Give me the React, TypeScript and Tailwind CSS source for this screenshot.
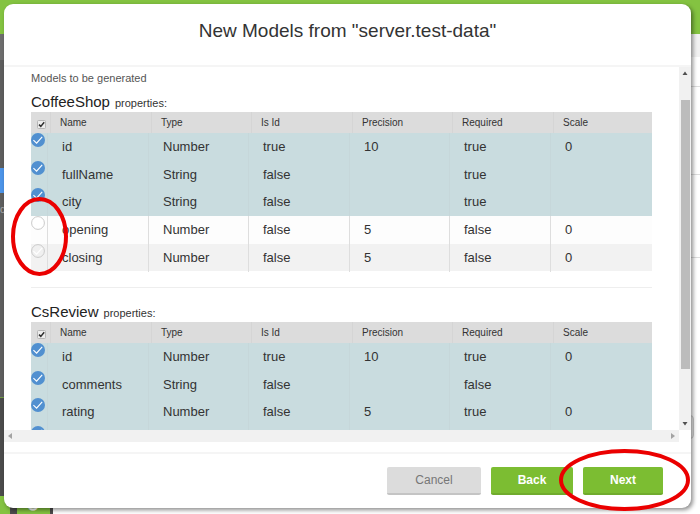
import React from "react";

type Row = { name: string; type: string; isId: string; precision: string; required: string; scale: string; on: boolean };

const headings = ["Name", "Type", "Is Id", "Precision", "Required", "Scale"];

const coffeeShop: Row[] = [
  { name: "id", type: "Number", isId: "true", precision: "10", required: "true", scale: "0", on: true },
  { name: "fullName", type: "String", isId: "false", precision: "", required: "true", scale: "", on: true },
  { name: "city", type: "String", isId: "false", precision: "", required: "true", scale: "", on: true },
  { name: "opening", type: "Number", isId: "false", precision: "5", required: "false", scale: "0", on: false },
  { name: "closing", type: "Number", isId: "false", precision: "5", required: "false", scale: "0", on: false },
];

const csReview: Row[] = [
  { name: "id", type: "Number", isId: "true", precision: "10", required: "true", scale: "0", on: true },
  { name: "comments", type: "String", isId: "false", precision: "", required: "false", scale: "", on: true },
  { name: "rating", type: "Number", isId: "false", precision: "5", required: "true", scale: "0", on: true },
  { name: "", type: "", isId: "", precision: "", required: "", scale: "", on: true },
];

function Ring({ className, w, h }: { className: string; w: number; h: number }) {
  return (
    <svg className={"pointer-events-none absolute z-10 " + className} width={w} height={h} viewBox={`0 0 ${w} ${h}`} fill="none" aria-hidden="true">
      <ellipse cx={w / 2} cy={h / 2} rx={w / 2 - 2} ry={h / 2 - 2} stroke="#eb0000" strokeWidth="4" />
    </svg>
  );
}

function RowTick({ row, striped, id }: { row: Row; striped: boolean; id: string }) {
  return (
    <label htmlFor={id} className="relative block h-[14px] w-[14px]">
      <input id={id} type="checkbox" defaultChecked={row.on} aria-label={row.name || "property"} className="absolute inset-0 h-[14px] w-[14px] cursor-pointer appearance-none rounded-full" />
      <svg className="pointer-events-none block" width="14" height="14" viewBox="0 0 14 14" fill="none">
        {row.on ? (
          <circle cx="7" cy="7" r="7" fill="#5190d0" />
        ) : (
          <circle cx="7" cy="7" r="6.4" fill={striped ? "#f0f0f0" : "#ffffff"} stroke="#cacaca" strokeWidth="1" />
        )}
        {(row.on || striped) && <path d="M2.4 7.2 5.6 10.2 11.2 3.8" stroke="#ffffff" strokeWidth="1.1" />}
      </svg>
    </label>
  );
}

function ModelTable({ title, rows, children }: { title: string; rows: Row[]; children?: React.ReactNode }) {
  return (
    <section className="relative">
      <h2 className="flex h-5 items-baseline gap-[5px] text-[15px] leading-5 text-[#222]">
        {title} <span className="text-[11px] text-[#333]">properties:</span>
      </h2>
      <table className="block w-full text-left text-[#333]">
        <thead className="block">
          <tr className="grid h-[21px] grid-cols-[20px_101fr_100fr_101fr_100fr_101fr_98fr] bg-[#dcdcdc] text-[10px]">
            <th className="relative flex items-center justify-end border-r border-[#d5d5d5] pt-1 pr-1 font-normal">
              <input type="checkbox" defaultChecked aria-label={"Select all " + title + " properties"} className="absolute h-[9px] w-[9px] appearance-none" />
              <svg className="pointer-events-none" width="9" height="9" viewBox="0 0 9 9" fill="none" aria-hidden="true">
                <rect x="0.5" y="0.5" width="8" height="8" rx="1" fill="#ececec" stroke="#b5b5b5" />
                <path d="M2 4.6 3.8 6.4 7.2 2.3" stroke="#2e2e2e" strokeWidth="1.5" />
              </svg>
            </th>
            {headings.map((h) => (
              <th key={h} className="border-r border-[#d5d5d5] pl-[9px] leading-[21px] font-normal last:border-r-0">
                {h}
              </th>
            ))}
          </tr>
        </thead>
        <tbody className="block text-[13px]">
          {rows.map((row, i) => {
            const line = row.on ? "border-[#c6d7da]" : "border-[#dedede]";
            const fill = row.on ? "bg-[#c9dcdf]" : i % 2 ? "bg-[#fdfdfd]" : "bg-[#f2f2f2]";
            const height = i % 3 === 1 ? "h-[27px]" : "h-7";
            return (
              <tr key={i} className={"grid grid-cols-[17px_101fr_100fr_101fr_100fr_101fr_101fr] " + fill + " " + height}>
                <td className={"border-r " + line}>
                  <RowTick row={row} striped={i % 2 === 0} id={title + i} />
                </td>
                {[row.name, row.type, row.isId, row.precision, row.required, row.scale].map((v, c) => (
                  <td key={c} className={"border-r pl-[14px] leading-7 last:border-r-0 " + line}>
                    {v}
                  </td>
                ))}
              </tr>
            );
          })}
        </tbody>
      </table>
      {children}
    </section>
  );
}

function Backdrop() {
  return (
    <div className="absolute inset-0 flex flex-col overflow-hidden bg-white" aria-hidden="true">
      <div className="h-[34px] shrink-0 bg-[#84c341]" />
      <div className="flex min-h-0 flex-1">
        <div className="flex w-5 flex-col bg-[#5e5e5e] text-[10px] text-[#aaa]">
          <div className="h-[26px] bg-[#6e6e6e]" />
          <div className="mt-[108px] h-[25px] bg-[#4d94e8]" />
          <div className="mt-[9px] h-4 leading-4">c</div>
          <div className="mt-[179px] flex-1 border-t border-[#6f9a44] bg-[#4b4b4b]" />
        </div>
        <div className="flex flex-1 flex-col">
          <div className="h-[23px] bg-[#f1f1f1]" />
          <div className="h-[30px] border-b border-[#dddddd]" />
          <div className="h-[88px] border-b border-[#dddddd]" />
          <div className="h-[83px] border-b border-[#dddddd]" />
          <div className="mt-[157px] mr-[6px] h-6 rounded-sm border border-[#cccccc] bg-[#eeeeee]" />
        </div>
      </div>
      <div className="absolute bottom-0 left-0 flex h-[18px] w-[53px] bg-[#4b4b4b]">
        <div className="w-[10px] bg-[#84c341]" />
        <div className="ml-[7px] flex w-[33px] items-end justify-center bg-[#84c341] text-[14px] font-bold text-white">
          <span className="-rotate-90 pl-1 leading-3">C</span>
        </div>
      </div>
    </div>
  );
}

export default function App() {
  return (
    <div className="relative h-screen overflow-hidden pt-1 pr-[9px] pb-[6px] pl-1 font-['Liberation_Sans',Arial,sans-serif]">
      <Backdrop />
      <main className="relative flex h-full flex-col rounded-[9px] bg-white shadow-[2px_2px_4px_0px_rgba(0,0,0,0.45)]">
        <header className="flex h-[63px] shrink-0 items-center justify-center border-b-2 border-[#f5f5f5] pb-[7px]">
          <h1 className="text-[19px] leading-6 text-[#333]">New Models from "server.test-data"</h1>
        </header>
        <div className="grid min-h-0 flex-1 grid-cols-[1fr_12px] grid-rows-[1fr_12px]">
          <div className="min-h-0 overflow-hidden px-[27px]">
            <p className="mt-[3px] text-[11px] leading-4 text-[#555]">Models to be generated</p>
            <div className="mt-[6px]">
              <ModelTable title="CoffeeShop" rows={coffeeShop}>
                <Ring className="bottom-[-5px] left-[-20px]" w={57} h={79} />
              </ModelTable>
            </div>
            <hr className="mt-4 mb-[14px] border-[#eeeeee]" />
            <ModelTable title="CsReview" rows={csReview} />
          </div>
          <div className="flex flex-col items-center bg-[#f1f1f1] py-1">
            <svg width="6" height="4" viewBox="0 0 6 4"><path d="M3 0.5 5.5 4H0.5Z" fill="#505050" /></svg>
            <div className="mt-[25px] mb-[53px] w-[9px] flex-1 bg-[#bcbcbc]" />
            <svg width="6" height="4" viewBox="0 0 6 4"><path d="M3 3.5 0.5 0H5.5Z" fill="#505050" /></svg>
          </div>
          <div className="flex items-center justify-between bg-[#f1f1f1] px-1">
            <svg width="4" height="6" viewBox="0 0 4 6"><path d="M0 3 4 0V6Z" fill="#a3a3a3" /></svg>
            <svg width="4" height="6" viewBox="0 0 4 6"><path d="M4 3 0 0V6Z" fill="#a3a3a3" /></svg>
          </div>
        </div>
        <footer className="mt-[10px] flex h-14 shrink-0 justify-end gap-[10px] border-t-2 border-[#f5f5f5] pt-[13px] pr-7 text-xs">
          <button className="h-7 w-[94px] rounded-xs border-b-2 border-[#c4c4c4] bg-[#dcdcdc] text-[#777]">Cancel</button>
          <button className="h-7 w-[82px] rounded-xs border-b-2 border-[#70ab2d] bg-[#7cbd32] font-bold text-white">Back</button>
          <div className="relative">
            <button className="h-7 w-20 rounded-xs border-b-2 border-[#70ab2d] bg-[#7cbd32] font-bold text-white">Next</button>
            <Ring className="top-[-18px] left-[-24px]" w={131} h={62} />
          </div>
        </footer>
      </main>
    </div>
  );
}
